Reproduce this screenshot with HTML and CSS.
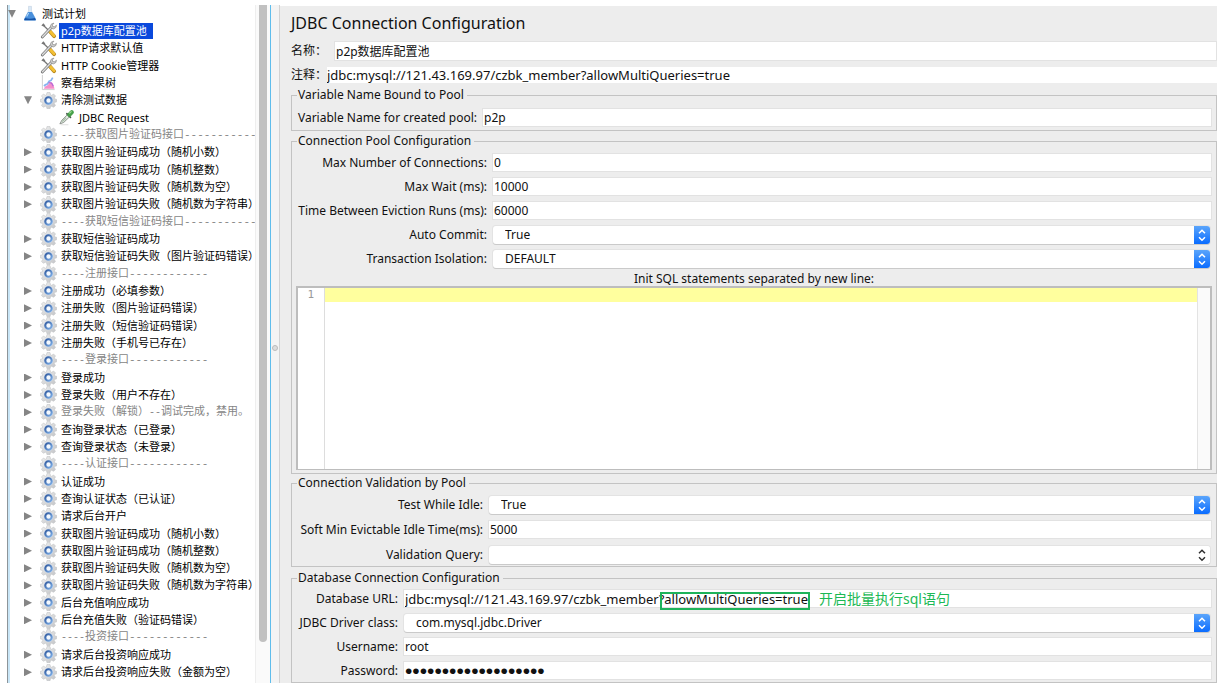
FILE: index.html
```html
<!DOCTYPE html>
<html lang="zh-CN">
<head>
<meta charset="utf-8">
<title>JDBC Connection Configuration</title>
<link rel="stylesheet" href="styles.css">
</head>
<body>
<svg class="defs" aria-hidden="true">
  <defs>
    <linearGradient id="metal" x1="0" y1="0" x2="1" y2="1"><stop offset="0" stop-color="#f2f2f2"/><stop offset="1" stop-color="#c0c2c5"/></linearGradient>
    <linearGradient id="blue" x1="0" y1="0" x2="1" y2="1"><stop offset="0" stop-color="#305a9f"/><stop offset="1" stop-color="#7fb0e8"/></linearGradient>
    <symbol id="gear" viewBox="0 0 18 18">
      <path d="M7.4 0.6h3.2l.5 2.3 1.3.6 2-1.3 2 2-1.2 2 .5 1.2 2 .4v2.6l-2 .5-.6 1.3 1.3 2-2 2-2-1.2-1.3.6-.5 2.2H7.4l-.5-2.2-1.3-.6-2 1.2-2-2 1.3-2-.6-1.3-2-.5V7.8l2-.4.6-1.2-1.3-2 2-2 2 1.3 1.3-.6z" fill="url(#metal)" stroke="#c0c1c2" stroke-width=".6"/>
      <circle cx="9" cy="9" r="5" fill="#d3deec"/>
      <circle cx="9" cy="9" r="3.4" fill="#f4f9ff" stroke="url(#blue)" stroke-width="2.2"/>
    </symbol>
    <symbol id="tools" viewBox="0 0 18 18">
      <path d="M4.6 4.6 10 9.7" stroke="#777" stroke-width="1.4" stroke-linecap="round"/>
      <path d="M1.4 3.6 3.6 1.4 5.6 3.6 5 5.2z" fill="#777"/>
      <path d="M10.3 9.8 15 15" stroke="#b98a20" stroke-width="4" stroke-linecap="round"/>
      <path d="M10.5 9.8 14.8 14.5" stroke="#f4c034" stroke-width="2.8" stroke-linecap="round"/>
      <path d="M2.4 15.8 12.2 5.6" stroke="#777" stroke-width="3" stroke-linecap="round"/>
      <path d="M2.6 15.6 12.2 5.6" stroke="#dcdcdc" stroke-width="1.5" stroke-linecap="round"/>
      <path d="M14.8 1.2 12.2 2l-1.3 2.5 1.1 2.2 2.4.6 2.4-1.5.7-2.4-2.4 1.7-1.7-.5-.3-1.5z" fill="#ccc" stroke="#888" stroke-width=".7"/>
    </symbol>
    <symbol id="flask" viewBox="0 0 18 18">
      <path d="M7 1h4M7.4 1.2v5L3.4 14h11.2L10.6 6.2v-5" fill="#dceaf8" stroke="#c5d5e4" stroke-width=".8"/>
      <path d="M6.8 7.4 2.3 15.5q0 1.4 1 1.4h11.4q1 0 1-1.4L11.2 7.4z" fill="#4a90dc"/>
      <path d="M3.4 14q5.6 1.6 11.2 0l1 2.6H2.4z" fill="#1654a8"/>
      <path d="m7.5 8.5-2.2 4" stroke="#b8dcfa" stroke-width="1.2"/>
    </symbol>
    <symbol id="chart" viewBox="0 0 18 18">
      <path d="M2.5 1v15.5h13" fill="none" stroke="#ccc"/>
      <path d="M4 15.5q1-3 3.6-3.4Q10 9 12 8.4q2 1 3.4 7.1z" fill="#f58fca"/>
      <path d="M4.3 13q1.4-2.4 3-2 1.2-1 2.4-3.4l2-.8 1.8-3" fill="none" stroke="#86b2f0" stroke-width="1.8"/>
      <path d="M9 9.5q3-1.5 5 3.4" fill="none" stroke="#b66cd8" stroke-width="1.4"/>
    </symbol>
    <symbol id="dropper" viewBox="0 0 18 18">
      <path d="M2 15.8 4 12l6-6 2.3 2.2-6.2 6z" fill="#e4eee4" stroke="#7f8780" stroke-width=".9"/>
      <path d="m4.5 13.2 4-4" stroke="#a9bda9" stroke-width="1.4"/>
      <path d="m9.4 5 3.8 3.8" stroke="#4d5a50" stroke-width="1.8" stroke-linecap="round"/>
      <path d="m12 6 2.6-2.6" stroke="#46a04a" stroke-width="4.4" stroke-linecap="round"/>
      <path d="m12.4 4.3 1.6-1.5" stroke="#9ad890" stroke-width="1.3" stroke-linecap="round"/>
      <path d="M3 16.7h8" stroke="#ddd"/>
    </symbol>
    <symbol id="updown" viewBox="0 0 16 18">
      <path d="m5 7.2 3-3 3 3M5 11.2l3 3 3-3" fill="none" stroke="currentColor" stroke-width="1.5"/>
    </symbol>
  </defs>
</svg>
<div class="app">
  <nav class="tree" aria-label="测试计划">
    <ul class="rows">
      <li class="root"><button class="tw open" aria-label="折叠"></button><svg><use href="#flask"/></svg><span>测试计划</span></li>
      <li><i></i><svg><use href="#tools"/></svg><span class="sel">p2p数据库配置池</span></li>
      <li><i></i><svg><use href="#tools"/></svg><span>HTTP请求默认值</span></li>
      <li><i></i><svg><use href="#tools"/></svg><span>HTTP Cookie管理器</span></li>
      <li><i></i><svg><use href="#chart"/></svg><span>察看结果树</span></li>
      <li><button class="tw open" aria-label="折叠"></button><svg><use href="#gear"/></svg><span>清除测试数据</span></li>
      <li class="leaf"><i></i><svg><use href="#dropper"/></svg><span>JDBC Request</span></li>
      <li class="off"><i></i><svg><use href="#gear"/></svg><span><b>----</b>获取图片验证码接口<em>-----------</em></span></li>
      <li><button class="tw" aria-label="展开"></button><svg><use href="#gear"/></svg><span>获取图片验证码成功（随机小数）</span></li>
      <li><button class="tw" aria-label="展开"></button><svg><use href="#gear"/></svg><span>获取图片验证码成功（随机整数）</span></li>
      <li><button class="tw" aria-label="展开"></button><svg><use href="#gear"/></svg><span>获取图片验证码失败（随机数为空）</span></li>
      <li><button class="tw" aria-label="展开"></button><svg><use href="#gear"/></svg><span>获取图片验证码失败（随机数为字符串）</span></li>
      <li class="off"><i></i><svg><use href="#gear"/></svg><span><b>----</b>获取短信验证码接口<em>-----------</em></span></li>
      <li><button class="tw" aria-label="展开"></button><svg><use href="#gear"/></svg><span>获取短信验证码成功</span></li>
      <li><button class="tw" aria-label="展开"></button><svg><use href="#gear"/></svg><span>获取短信验证码失败（图片验证码错误）</span></li>
      <li class="off"><i></i><svg><use href="#gear"/></svg><span><b>----</b>注册接口<em>------------</em></span></li>
      <li><button class="tw" aria-label="展开"></button><svg><use href="#gear"/></svg><span>注册成功（必填参数）</span></li>
      <li><button class="tw" aria-label="展开"></button><svg><use href="#gear"/></svg><span>注册失败（图片验证码错误）</span></li>
      <li><button class="tw" aria-label="展开"></button><svg><use href="#gear"/></svg><span>注册失败（短信验证码错误）</span></li>
      <li><button class="tw" aria-label="展开"></button><svg><use href="#gear"/></svg><span>注册失败（手机号已存在）</span></li>
      <li class="off"><i></i><svg><use href="#gear"/></svg><span><b>----</b>登录接口<em>------------</em></span></li>
      <li><button class="tw" aria-label="展开"></button><svg><use href="#gear"/></svg><span>登录成功</span></li>
      <li><button class="tw" aria-label="展开"></button><svg><use href="#gear"/></svg><span>登录失败（用户不存在）</span></li>
      <li class="off"><button class="tw" aria-label="展开"></button><svg><use href="#gear"/></svg><span>登录失败（解锁）<b>--</b>调试完成，禁用。</span></li>
      <li><button class="tw" aria-label="展开"></button><svg><use href="#gear"/></svg><span>查询登录状态（已登录）</span></li>
      <li><button class="tw" aria-label="展开"></button><svg><use href="#gear"/></svg><span>查询登录状态（未登录）</span></li>
      <li class="off"><i></i><svg><use href="#gear"/></svg><span><b>----</b>认证接口<em>------------</em></span></li>
      <li><button class="tw" aria-label="展开"></button><svg><use href="#gear"/></svg><span>认证成功</span></li>
      <li><button class="tw" aria-label="展开"></button><svg><use href="#gear"/></svg><span>查询认证状态（已认证）</span></li>
      <li><button class="tw" aria-label="展开"></button><svg><use href="#gear"/></svg><span>请求后台开户</span></li>
      <li><button class="tw" aria-label="展开"></button><svg><use href="#gear"/></svg><span>获取图片验证码成功（随机小数）</span></li>
      <li><button class="tw" aria-label="展开"></button><svg><use href="#gear"/></svg><span>获取图片验证码成功（随机整数）</span></li>
      <li><button class="tw" aria-label="展开"></button><svg><use href="#gear"/></svg><span>获取图片验证码失败（随机数为空）</span></li>
      <li><button class="tw" aria-label="展开"></button><svg><use href="#gear"/></svg><span>获取图片验证码失败（随机数为字符串）</span></li>
      <li><button class="tw" aria-label="展开"></button><svg><use href="#gear"/></svg><span>后台充值响应成功</span></li>
      <li><button class="tw" aria-label="展开"></button><svg><use href="#gear"/></svg><span>后台充值失败（验证码错误）</span></li>
      <li class="off"><i></i><svg><use href="#gear"/></svg><span><b>----</b>投资接口<em>------------</em></span></li>
      <li><button class="tw" aria-label="展开"></button><svg><use href="#gear"/></svg><span>请求后台投资响应成功</span></li>
      <li><button class="tw" aria-label="展开"></button><svg><use href="#gear"/></svg><span>请求后台投资响应失败（金额为空）</span></li>
    </ul>
    <div class="track"><div class="thumb"></div></div>
  </nav>
  <div class="divider"><span class="grip"></span></div>
  <main class="panel">
    <h1>JDBC Connection Configuration</h1>
    <div class="name"><label for="name">名称：</label><input id="name" value="p2p数据库配置池"></div>
    <div class="comment"><label for="comment">注释：</label><input id="comment" class="wide" value="jdbc:mysql://121.43.169.97/czbk_member?allowMultiQueries=true"></div>

    <fieldset class="bound">
      <legend>Variable Name Bound to Pool</legend>
      <div class="form">
        <label for="pool">Variable Name for created pool:</label><input id="pool" value="p2p">
      </div>
    </fieldset>

    <fieldset class="config">
      <legend>Connection Pool Configuration</legend>
      <div class="form">
        <label for="max">Max Number of Connections:</label><input id="max" value="0">
        <label for="wait">Max Wait (ms):</label><input id="wait" value="10000">
        <label for="evict">Time Between Eviction Runs (ms):</label><input id="evict" value="60000">
        <label for="auto">Auto Commit:</label>
        <div class="combo"><select id="auto"><option>True</option><option>False</option></select><svg><use href="#updown"/></svg></div>
        <label for="iso">Transaction Isolation:</label>
        <div class="combo"><select id="iso"><option>DEFAULT</option></select><svg><use href="#updown"/></svg></div>
      </div>
      <label class="sql" for="sql">Init SQL statements separated by new line:</label>
      <div class="editor"><div class="gutter">1</div><textarea id="sql"></textarea><div class="rail"></div></div>
    </fieldset>

    <fieldset class="valid">
      <legend>Connection Validation by Pool</legend>
      <div class="form">
        <label for="idle">Test While Idle:</label>
        <div class="combo"><select id="idle"><option>True</option><option>False</option></select><svg><use href="#updown"/></svg></div>
        <label for="soft">Soft Min Evictable Idle Time(ms):</label><input id="soft" value="5000">
        <label for="query">Validation Query:</label>
        <div class="combo plain"><select id="query"><option></option></select><svg><use href="#updown"/></svg></div>
      </div>
    </fieldset>

    <fieldset class="database">
      <legend>Database Connection Configuration</legend>
      <div class="form">
        <label for="url">Database URL:</label>
        <div class="url"><input id="url" class="wide" value="jdbc:mysql://121.43.169.97/czbk_member?allowMultiQueries=true"><span class="mark"></span><span class="note">开启批量执行sql语句</span></div>
        <label for="driver">JDBC Driver class:</label>
        <div class="combo"><select id="driver"><option>com.mysql.jdbc.Driver</option></select><svg><use href="#updown"/></svg></div>
        <label for="user">Username:</label><input id="user" value="root">
        <label for="pass">Password:</label><input id="pass" type="password" value="1234567890123456789">
      </div>
    </fieldset>
  </main>
</div>
</body>
</html>
```
FILE: styles.css
```css
* { box-sizing: border-box; }
html, body { height: 100%; margin: 0; }
body {
  background: #fff;
  color: #111;
  font: 12px/16px "Noto Sans", "Noto Sans CJK SC", sans-serif;
  overflow: hidden;
}
input, select, textarea, button { font: inherit; color: inherit; margin: 0; border: 0; padding: 0; border-radius: 0; outline: 0; }
.defs { position: absolute; width: 0; height: 0; }
.app { display: flex; height: 100vh; padding: 5px 2px 0 7px; }

.tree { display: flex; flex: none; width: 263px; border-left: 1px solid #8d9499; box-shadow: inset 2px 0 #c9e6f7; }
.rows { display: flex; flex-direction: column; flex: 1; min-width: 0; margin: 0; padding: 0 0 2px; list-style: none; }
.rows li { display: flex; flex: 1; min-height: 0; align-items: center; padding-left: 16px; font-size: 11px; line-height: 16px; white-space: nowrap; color: #000; }
.rows .root { padding-left: 0; }
.rows .root svg { width: 16px; }
.rows .leaf { padding-left: 34px; }
.rows .off { color: #858585; }
.rows svg { flex: none; width: 17px; height: 17px; }
.rows span { margin-left: 2px; padding-left: 2px; }
.rows .sel { background: #0a49dc; color: #fff; padding-right: 6px; }
.rows i { width: 16px; flex: none; }
.rows b, .rows em { font: 10px/16px "Liberation Mono", monospace; }
.rows em { font-size: 11px; }
.tw { flex: none; width: 8px; height: 8px; background: #858585; clip-path: polygon(0 0, 100% 50%, 0 100%); }
.rows .tw { margin-right: 8px; }
.rows .root .tw { margin-right: 6px; }
.tw.open { clip-path: polygon(0 0, 100% 0, 50% 100%); }
.track { width: 15px; border-left: 1px solid #eee; background: #fafafa; padding: 0 3px; }
.thumb { height: 94%; width: 8px; background: #c1c1c1; border-radius: 0 0 4px 4px; }

.divider { display: flex; align-items: center; flex: none; width: 10px; border-left: 1px solid #5fbdec; border-right: 1px solid #d3d3d3; background: #f4f4f4; }
.grip { width: 6px; height: 6px; margin: 8px 1px 0; border: 1px solid #bbb; border-radius: 50%; background: #ddd; }

.panel { display: flex; flex: 1; min-width: 0; flex-direction: column; background: #ededed; margin-top: 1px; padding-left: 11px; }
h1 { margin: 7px 0 9px; font-size: 16px; line-height: 20px; font-weight: 400; }
.name, .comment { display: flex; align-items: center; }
.name { gap: 6px; padding-right: 1px; margin-bottom: 7px; }
.name label, .comment label { flex: none; width: 36px; white-space: nowrap; }
.name label { width: 38px; }
.comment { background: #fff; height: 16px; margin-bottom: 4px; }
.comment label { background: #ededed; }
.comment input { height: 16px; }
input { width: 100%; min-width: 0; height: 17px; background: #fff; box-shadow: 0 0 0 1px #e2e2e2, 0 1px #c9c9c9; padding-left: 1px; }
.comment input { box-shadow: none; padding-left: 0; }
.name input { height: 18px; }
.wide { font-size: 13px; }

fieldset { flex: none; min-width: 0; margin: 0 0 2px; padding: 6px 4px 4px; border: 1px solid #c3c3c3; }
legend { margin-left: 1px; padding: 0 3px 0 1px; line-height: 16px; }
.form { display: grid; grid-template-columns: 191px 1fr; gap: 7px 6px; align-items: center; padding-right: 1px; }
.form label { text-align: right; line-height: 17px; white-space: nowrap; }
.bound .form { grid-template-columns: 181px 1fr; }
.config { display: flex; flex: 1; flex-direction: column; min-height: 0; margin-bottom: 1px; padding: 5px 4px 3px; }
.sql { text-align: center; margin: 4px 0 -1px; }
.valid { margin-bottom: 3px; padding: 5px 4px 3px; }
.valid .form { grid-template-columns: 187px 1fr; row-gap: 8px; }
.database { padding: 4px 4px 3px; margin-bottom: 0; }
.database .form { grid-template-columns: 102px 1fr; }

.combo { display: grid; grid-template-columns: 1fr 16px; height: 18px; margin: 0 1px -1px 0; background: #fff; border-radius: 3px; box-shadow: 0 1px #cacaca, 0 0 0 1px #e3e3e3; }
.combo select { grid-area: 1 / 1 / 2 / 3; width: 100%; appearance: none; background: none; padding-left: 12px; line-height: 16px; }
.combo svg { grid-area: 1 / 2; width: 16px; height: 18px; color: #fff; background: linear-gradient(#5ba5fb, #0a6cff); border-radius: 0 3px 3px 0; pointer-events: none; }
.combo.plain svg { color: #333; background: #fff; }

.editor { display: flex; flex: 1; min-height: 0; border: 2px solid #bdbdbd; border-width: 2px 2px 1px; background: #fff; }
.gutter { width: 27px; flex: none; border-right: 1px solid #ddd; padding-right: 10px; text-align: right; color: #999; font: 11px/14px "DejaVu Sans Mono", monospace; }
.editor textarea { flex: 1; resize: none; background: linear-gradient(#ffff9e 0 14px, #fff 14px); font: 11px/14px "DejaVu Sans Mono", monospace; }
.rail { width: 13px; border-left: 1px solid #e3e3e3; background: #fafafa; }

.url { position: relative; display: flex; }
.mark { position: absolute; left: 256px; top: 2px; width: 150px; height: 18px; border: 2px solid #1eb35a; }
.note { position: absolute; left: 415px; top: 0; font-size: 14px; line-height: 18px; color: #1cb955; }
#pass { font: 21px/17px "Liberation Sans", sans-serif; }
```
